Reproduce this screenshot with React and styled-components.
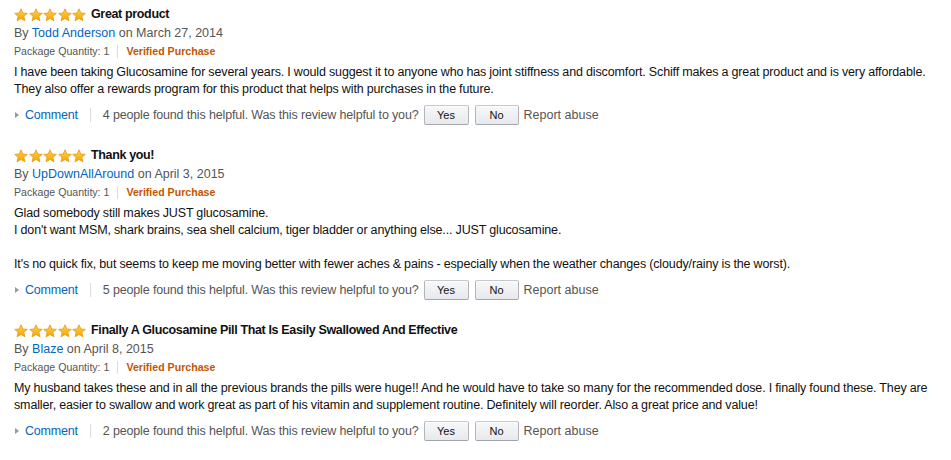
import React from "react";
import styled, { createGlobalStyle } from "styled-components";

const Global = createGlobalStyle`
  html, body { margin: 0; padding: 0; background: #fff; }
  body { font-family: Arial, "Liberation Sans", sans-serif; color: #111; }
`;

const Page = styled.div`
  padding: 7px 0 0 14px;
  width: 918px;
`;

const Review = styled.div`
  display: flex;
  flex-direction: column;
  margin-bottom: 23px;
`;

const TitleRow = styled.div`
  display: flex;
  align-items: center;
  gap: 5px;
  height: 15px;
`;

const Stars = styled.div`
  display: flex;
  gap: 0.5px;
`;

const Title = styled.span`
  font-size: 12.5px;
  letter-spacing: -0.35px;
  font-weight: bold;
  color: #111;
  line-height: 15px;
`;

const ByLine = styled.div`
  font-size: 12.5px;
  color: #555;
  line-height: 18px;
  margin-top: 2px;
`;

const Link = styled.a`
  color: #0066c0;
  text-decoration: none;
`;

const Meta = styled.div`
  display: flex;
  align-items: center;
  font-size: 10.6px;
  line-height: 18px;
  color: #555;
`;

const Divider = styled.span`
  display: inline-block;
  width: 1px;
  height: ${(p) => p.$h || 13}px;
  background: #ddd;
  margin: 0 ${(p) => p.$m || 8}px;
`;

const Verified = styled.span`
  color: #c45500;
  font-weight: bold;
`;

const Body = styled.div`
  font-size: 12.5px;
  letter-spacing: -0.13px;
  word-spacing: -0.2px;
  line-height: 17px;
  color: #111;
  margin-top: 4px;
`;

const Para = styled.p`
  margin: 0;
  min-height: 17px;
`;

const Actions = styled.div`
  display: flex;
  align-items: center;
  font-size: 12.5px;
  color: #555;
  margin-top: 7px;
  height: 20px;
`;

const CommentLink = styled(Link)`
  letter-spacing: -0.2px;
`;

const Arrow = styled.span`
  display: inline-block;
  width: 0;
  height: 0;
  border-top: 3px solid transparent;
  border-bottom: 3px solid transparent;
  border-left: 4px solid #999;
  margin: 0 6px 0 1px;
`;

const Button = styled.button`
  font-family: Arial, "Liberation Sans", sans-serif;
  font-size: 11px;
  color: #111;
  height: 20px;
  width: ${(p) => p.$w}px;
  padding: 0;
  margin-right: ${(p) => p.$mr}px;
  border: 1px solid #adb1b8;
  border-color: #c6c8cc #b3b5ba #a2a6ac;
  border-radius: 2px;
  background: linear-gradient(to bottom, #f7f8fa, #e7e9ec);
  box-shadow: inset 0 1px 0 rgba(255, 255, 255, 0.6);
`;

const Helpful = styled.span`
  letter-spacing: -0.15px;
  margin-right: 5px;
`;

const Star = () => (
  <svg width="14" height="14" viewBox="0 0 20 20">
    <defs>
      <linearGradient id="sg" x1="0" y1="0" x2="0" y2="1">
        <stop offset="0" stopColor="#ffd54a" />
        <stop offset="1" stopColor="#f7a300" />
      </linearGradient>
    </defs>
    <path
      d="M10 1.2 L12.6 7.2 L19 7.7 L14.1 11.9 L15.6 18.3 L10 14.9 L4.4 18.3 L5.9 11.9 L1 7.7 L7.4 7.2 Z"
      fill="url(#sg)"
      stroke="#e49b1a"
      strokeWidth="1.2"
      strokeLinejoin="round"
    />
  </svg>
);

const reviews = [
  {
    title: "Great product",
    author: "Todd Anderson",
    date: "March 27, 2014",
    body: [
      "I have been taking Glucosamine for several years. I would suggest it to anyone who has joint stiffness and discomfort. Schiff makes a great product and is very affordable. They also offer a rewards program for this product that helps with purchases in the future.",
    ],
    helpful: 4,
  },
  {
    title: "Thank you!",
    author: "UpDownAllAround",
    date: "April 3, 2015",
    body: [
      "Glad somebody still makes JUST glucosamine.",
      "I don't want MSM, shark brains, sea shell calcium, tiger bladder or anything else... JUST glucosamine.",
      "",
      "It's no quick fix, but seems to keep me moving better with fewer aches & pains - especially when the weather changes (cloudy/rainy is the worst).",
    ],
    helpful: 5,
  },
  {
    title: "Finally A Glucosamine Pill That Is Easily Swallowed And Effective",
    author: "Blaze",
    date: "April 8, 2015",
    body: [
      "My husband takes these and in all the previous brands the pills were huge!! And he would have to take so many for the recommended dose. I finally found these. They are smaller, easier to swallow and work great as part of his vitamin and supplement routine. Definitely will reorder. Also a great price and value!",
    ],
    helpful: 2,
  },
];

export default function App() {
  return (
    <>
      <Global />
      <Page>
        {reviews.map((r) => (
          <Review key={r.title}>
            <TitleRow>
              <Stars>
                {[0, 1, 2, 3, 4].map((i) => (
                  <Star key={i} />
                ))}
              </Stars>
              <Title>{r.title}</Title>
            </TitleRow>
            <ByLine>
              By <Link href="#">{r.author}</Link> on {r.date}
            </ByLine>
            <Meta>
              Package Quantity: 1
              <Divider />
              <Verified>Verified Purchase</Verified>
            </Meta>
            <Body>
              {r.body.map((p, i) => (
                <Para key={i}>{p}</Para>
              ))}
            </Body>
            <Actions>
              <Arrow />
              <CommentLink href="#">Comment</CommentLink>
              <Divider $h={14} $m={12} />
              <Helpful>
                {r.helpful} people found this helpful. Was this review helpful to you?
              </Helpful>
              <Button $w={45} $mr={6}>Yes</Button>
              <Button $w={44} $mr={5}>No</Button>
              <span>Report abuse</span>
            </Actions>
          </Review>
        ))}
      </Page>
    </>
  );
}
